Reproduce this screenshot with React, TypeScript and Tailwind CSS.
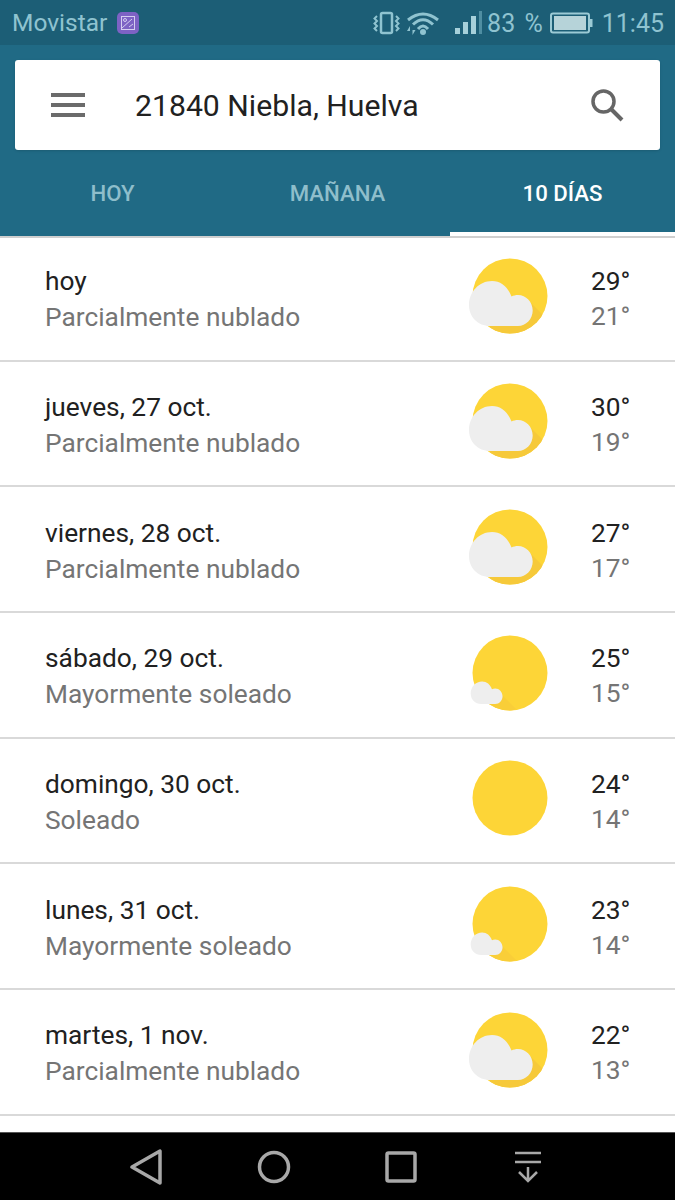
import React from "react";

const CLOUD = "M22 70 C10 70 1 61 1 49 C1 36 11 25 24 25 C33 25 40 31 43.500 40.500 C45.500 39.500 47.500 39 50 39 C58 39 64.700 46 64.700 54.500 C64.700 63 58 70 50 70 Z";

function WeatherIcon({ kind }: { kind: "partly" | "mostly" | "sunny" }) {
  const id = `sun-${kind}`;
  return (
    <svg width="84" height="80" viewBox="0 0 84 80" className="shrink-0 -mt-[4px]">
      <defs>
        <clipPath id={id}>
          <circle cx="42" cy="40" r="37.5" />
        </clipPath>
      </defs>
      <circle cx="42" cy="40" r="37.5" fill="#fdd537" />
      {kind === "partly" && (
        <>
          <path clipPath={`url(#${id})`} d="M62 46 L82 66 L60 84 L22 74 L22 68 Z" fill="#f6c93a" />
          <path d={CLOUD} fill="#eeeeee" />
        </>
      )}
      {kind === "mostly" && (
        <>
          <path clipPath={`url(#${id})`} d="M32 60 L48 76 L36 82 L14 72 Z" fill="#f9ce38" />
          <g transform="translate(2.2 36) scale(0.5)">
            <path d={CLOUD} fill="#eeeeee" />
          </g>
        </>
      )}
    </svg>
  );
}

const rows: { day: string; desc: string; hi: string; lo: string; kind: "partly" | "mostly" | "sunny" }[] = [
  { day: "hoy", desc: "Parcialmente nublado", hi: "29°", lo: "21°", kind: "partly" },
  { day: "jueves, 27 oct.", desc: "Parcialmente nublado", hi: "30°", lo: "19°", kind: "partly" },
  { day: "viernes, 28 oct.", desc: "Parcialmente nublado", hi: "27°", lo: "17°", kind: "partly" },
  { day: "sábado, 29 oct.", desc: "Mayormente soleado", hi: "25°", lo: "15°", kind: "mostly" },
  { day: "domingo, 30 oct.", desc: "Soleado", hi: "24°", lo: "14°", kind: "sunny" },
  { day: "lunes, 31 oct.", desc: "Mayormente soleado", hi: "23°", lo: "14°", kind: "mostly" },
  { day: "martes, 1 nov.", desc: "Parcialmente nublado", hi: "22°", lo: "13°", kind: "partly" },
];

function StatusIcons() {
  return (
    <>
      <svg width="28" height="24" viewBox="0 0 28 24" fill="none" stroke="#8fc3d0" className="shrink-0 -mt-[2px]">
        <rect x="8" y="2" width="11" height="20" rx="1.5" strokeWidth="2.500" />
        <path d="M4 5 L1.500 7.500 L4 10 L1.500 12.500 L4 15 L1.500 17.500 L4 20" strokeWidth="2" />
        <path d="M23 5 L25.500 7.500 L23 10 L25.500 12.500 L23 15 L25.500 17.500 L23 20" strokeWidth="2" />
      </svg>
      <svg width="34" height="24" viewBox="0 0 34 24" fill="none" stroke="#8fc3d0" strokeWidth="3" className="ml-[5px] shrink-0 -mt-[2px]">
        <path d="M2 9 Q17 -3 32 9" />
        <path d="M7 13.500 Q17 4 27 13.500" />
        <path d="M12 18 Q17 12 22 18" />
        <circle cx="17" cy="21" r="3" fill="#8fc3d0" stroke="none" />
        <path d="M4 15 L1 20 L4 20 Z M6.500 24 L9.500 19 L6.500 19 Z" fill="#8fc3d0" stroke="none" />
      </svg>
      <svg width="28" height="24" viewBox="0 0 28 24" className="ml-[14px] shrink-0 -mt-[2px]">
        <rect x="1" y="17" width="5" height="6" fill="#a6d0da" />
        <rect x="9" y="11" width="5" height="12" fill="#a6d0da" />
        <rect x="17" y="5" width="5" height="18" fill="#a6d0da" />
        <rect x="25" y="0" width="3" height="23" fill="#4f8ea2" />
      </svg>
      <span className="ml-[5px] [word-spacing:3px]">83 %</span>
      <svg width="43" height="24" viewBox="0 0 43 24" className="ml-[7px] shrink-0 -mt-[2px]">
        <rect x="1" y="2.500" width="38" height="19" rx="2" fill="none" stroke="#9bcad5" strokeWidth="2" />
        <rect x="4" y="5" width="32" height="14" fill="#b6d3d9" />
        <rect x="40" y="8" width="2.500" height="8" fill="#9bcad5" />
      </svg>
      <span className="ml-[9px]">11:45</span>
    </>
  );
}

export default function App() {
  return (
    <div className="w-[675px] h-[1200px] flex flex-col bg-white overflow-hidden font-['Roboto',sans-serif]">
      <div className="h-[45px] bg-[#1c5e76] flex items-center justify-between pl-[12px] pr-[11px] pt-[2px] text-[25px] leading-none text-[#8fc3d0] shrink-0">
        <div className="flex items-center">
          <span className="text-[24.5px]">Movistar</span>
          <div className="ml-[10px] -mt-[2px] w-[22px] h-[22px] rounded-[5px] bg-[#7d62c4] flex items-center justify-center">
            <svg width="14" height="14" viewBox="0 0 14 14" fill="none" stroke="#d5cdf0" strokeWidth="1">
              <rect x="0.500" y="0.500" width="13" height="13" />
              <circle cx="4" cy="4" r="1.500" />
              <path d="M1 12 L11 3" />
              <path d="M8 11 L12 8" />
            </svg>
          </div>
        </div>
        <div className="flex items-center">
          <StatusIcons />
        </div>
      </div>

      <div className="bg-[#206a85] shrink-0 h-[193px] border-b-2 border-[#cfcfcf] flex flex-col">
        <div className="mt-[15px] mx-[15px] h-[90px] bg-white rounded-[3px] flex items-center pl-[36px] pr-[36px] shadow-sm shrink-0">
          <svg width="34" height="24" viewBox="0 0 34 24" className="shrink-0">
            <rect x="0" y="0" width="34" height="4" fill="#6b6b6b" />
            <rect x="0" y="10" width="34" height="4" fill="#6b6b6b" />
            <rect x="0" y="20" width="34" height="4" fill="#6b6b6b" />
          </svg>
          <span className="ml-[50px] pt-[2px] text-[30.2px] leading-none text-[#212121] flex-1">21840 Niebla, Huelva</span>
          <svg width="34" height="34" viewBox="0 0 34 34" fill="none" stroke="#666666" className="shrink-0">
            <circle cx="13.500" cy="13.500" r="10.500" strokeWidth="3.500" />
            <path d="M21 21 L32 32" strokeWidth="4" />
          </svg>
        </div>
        <div className="flex-1 flex text-[22.2px] font-medium leading-none">
          <div className="w-[225px] flex items-center justify-center text-[#8fbecb]">HOY</div>
          <div className="w-[225px] flex items-center justify-center text-[#8fbecb]">MAÑANA</div>
          <div className="w-[225px] flex items-center justify-center text-white border-b-[4px] pt-[4px] border-white">10 DÍAS</div>
        </div>
      </div>

      <div className="flex-1 min-h-0 -mt-[2px] overflow-hidden">
        {rows.map((r) => (
          <div key={r.day} className="h-[125.67px] border-b-2 border-[#d9d9d9] flex items-center pl-[45px] pr-[44px] text-[26.3px] leading-[35px]">
            <div className="flex-1 mt-[3px]">
              <div className="text-[#212121]">{r.day}</div>
              <div className="text-[#757575] mt-[1px] -mb-[1px]">{r.desc}</div>
            </div>
            <WeatherIcon kind={r.kind} />
            <div className="ml-[39px] mt-[3px] w-[40px]">
              <div className="text-[#212121]">{r.hi}</div>
              <div className="text-[#757575]">{r.lo}</div>
            </div>
          </div>
        ))}
      </div>

      <div className="h-[68px] bg-black shrink-0 border-t border-[#555555] flex items-center relative">
        <svg width="32" height="36" viewBox="0 0 32 36" fill="none" stroke="#a8a8a8" strokeWidth="3.500" strokeLinejoin="round" className="ml-[130px] shrink-0">
          <path d="M2 18 L30 2 L30 34 Z" />
        </svg>
        <svg width="34" height="34" viewBox="0 0 34 34" fill="none" stroke="#a8a8a8" strokeWidth="3.500" className="ml-[95px] shrink-0">
          <circle cx="17" cy="17" r="14.500" />
        </svg>
        <svg width="32" height="32" viewBox="0 0 32 32" fill="none" stroke="#a8a8a8" strokeWidth="3.500" strokeLinejoin="round" className="ml-[94px] shrink-0">
          <rect x="2" y="2" width="28" height="28" rx="1.500" />
        </svg>
        <svg width="28" height="32" viewBox="0 0 28 32" fill="none" stroke="#a8a8a8" strokeWidth="2.500" className="ml-[97px] shrink-0">
          <path d="M1 2 H27 M1 11 H27 M14 16 V30 M5 21 L14 30 L23 21" />
        </svg>
      </div>
    </div>
  );
}
